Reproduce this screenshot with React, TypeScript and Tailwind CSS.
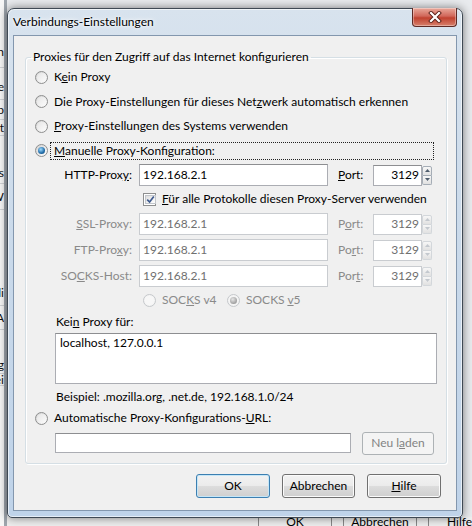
import React from "react";

const ui = "font-['Lato',sans-serif]";

type Child = { children?: React.ReactNode };

function Radio({ checked = false, disabled = false }: { checked?: boolean; disabled?: boolean }) {
  const ring = disabled
    ? "border-[#c5c8cb] bg-[#f4f4f4]"
    : "border-[#8e8f8f] bg-linear-to-br from-[#d2d2d2] to-[#ffffff]";
  const dot = checked
    ? disabled
      ? "bg-[radial-gradient(circle_at_40%_35%,#e6e6e6,#9a9a9a_75%)]"
      : "bg-[radial-gradient(circle_at_40%_35%,#9fdcff,#1f6aa6_60%,#174d7c)]"
    : disabled
      ? "bg-[#f7f7f7]"
      : "bg-linear-to-br from-[#e6e6e6] to-[#fbfbfb]";
  return (
    <span className={`shrink-0 w-[13px] h-[13px] rounded-full border flex items-center justify-center ${ring}`}>
      <span className={`rounded-full ${checked ? "w-[7px] h-[7px]" : "w-[9px] h-[9px]"} ${dot}`} />
    </span>
  );
}

function Checkbox() {
  return (
    <span className="shrink-0 w-[13px] h-[13px] border border-[#8e8f8f] bg-white p-[1px] flex">
      <span className="flex-1 flex items-center justify-center bg-linear-to-br from-[#dedede] to-[#ffffff] border border-[#c2c6cb]">
        <svg width="9" height="9" viewBox="0 0 9 9">
          <path d="M1.2 4.6 L3.6 7 L7.8 1.6" fill="none" stroke="#3e5a8e" strokeWidth="1.7" />
        </svg>
      </span>
    </span>
  );
}

function TextBox({ value = "", disabled = false, className = "" }: { value?: string; disabled?: boolean; className?: string }) {
  const look = disabled
    ? "border-[#c9ccd0] text-[#707070]"
    : "border-[#abadb3] border-t-[#8d8e91] text-black";
  return <div className={`flex items-center bg-white border pl-[3px] pr-[2px] ${look} ${className}`}>{value}</div>;
}

function Spinner({ disabled = false }: { disabled?: boolean }) {
  const fill = disabled ? "#c3c8ce" : "#4f5d6d";
  const edge = disabled ? "border-[#d3d7db]" : "border-[#a5adb6]";
  return (
    <div className="shrink-0 w-[10px] h-[19px] flex flex-col">
      <div className={`h-[10px] flex items-center justify-center border rounded-t-[2px] bg-linear-to-b from-[#f7f7f7] to-[#e1e1e1] ${edge}`}>
        <svg width="5" height="3" viewBox="0 0 5 3">
          <path d="M0 3 L2.5 0 L5 3 Z" fill={fill} />
        </svg>
      </div>
      <div className={`h-[9px] flex items-center justify-center border border-t-0 rounded-b-[2px] bg-linear-to-b from-[#f7f7f7] to-[#e1e1e1] ${edge}`}>
        <svg width="5" height="3" viewBox="0 0 5 3">
          <path d="M0 0 L2.5 3 L5 0 Z" fill={fill} />
        </svg>
      </div>
    </div>
  );
}

function ProxyRow({
  label,
  port,
  disabled = false,
  h,
}: {
  label: React.ReactNode;
  port: React.ReactNode;
  disabled?: boolean;
  h: string;
}) {
  const tone = disabled ? "text-[#8a8a8a]" : "text-black";
  return (
    <div className={`${h} flex items-center`}>
      <span className={`ml-[21px] w-[76px] text-right ${tone}`}>{label}</span>
      <TextBox value="192.168.2.1" disabled={disabled} className="ml-[7px] w-[189px] h-[22px]" />
      <span className={`ml-[10px] w-[35px] ${tone}`}>{port}</span>
      <TextBox value="3129" disabled={disabled} className="w-[49px] h-[21px] justify-end" />
      <Spinner disabled={disabled} />
    </div>
  );
}

function Button({ children, primary = false, disabled = false, className = "" }: Child & { primary?: boolean; disabled?: boolean; className?: string }) {
  const edge = primary ? "border-[#3c7fb1] shadow-[inset_0_0_0_1px_#c5e6f7]" : disabled ? "border-[#adb2b5]" : "border-[#707070] shadow-[inset_0_0_0_1px_#fbfbfb]";
  const bg = disabled
    ? "bg-[#f4f4f4] text-[#838383]"
    : "bg-[linear-gradient(#f2f2f2,#ebebeb_50%,#dddddd_50%,#cfcfcf)] text-black";
  return (
    <div className={`flex items-center justify-center rounded-[3px] border ${edge} ${bg} ${className}`}>{children}</div>
  );
}

function CloseButton() {
  return (
    <div className="w-[45px] h-[19px] -mt-[1px] rounded-b-[4px] border border-t-0 border-[#5e2a25] bg-[linear-gradient(#e9a99b,#d1675a_45%,#c0412f_55%,#d7806c)] flex items-center justify-center shadow-[inset_0_0_0_1px_rgba(255,255,255,0.35)]">
      <svg width="14" height="12" viewBox="0 0 14 12">
        <path d="M3 2 L11 10 M11 2 L3 10" stroke="#5b2019" strokeWidth="4" strokeLinecap="square" />
        <path d="M3 2 L11 10 M11 2 L3 10" stroke="#ffffff" strokeWidth="2.2" strokeLinecap="square" />
      </svg>
    </div>
  );
}

// window behind the dialog: only its edges show
const leftCells: [number, string][] = [
  [36, ""], [32, "n"], [6, ""], [26, "e"], [20, "b"], [16, "t"], [26, ""], [22, "s"], [26, "W"],
  [70, ""], [26, "li"], [24, "A"], [26, ""], [18, "g"], [12, "ei"], [100, ""],
];
const rightCells: [number, string][] = [
  [36, ""], [32, "Er"], [34, ""], [28, ""], [26, "n."], [30, ""], [30, "er"], [72, ""],
  [26, "er"], [24, "n."], [98, ""], [26, "n."], [64, ""],
];

function Strip({ cells, align }: { cells: [number, string][]; align: string }) {
  return (
    <div className="flex flex-col">
      {cells.map(([h, t], i) => (
        <div
          key={i}
          style={{ height: h }}
          className={`flex items-center overflow-hidden whitespace-nowrap ${align} ${i > 0 && t ? "border-b border-[#d2d4d7]" : ""} text-[#111]`}
        >
          {t}
        </div>
      ))}
    </div>
  );
}

function Backdrop() {
  return (
    <div className="absolute inset-0 flex flex-col">
      <div className="h-[10px] bg-linear-to-b from-[#c9ccd0] to-[#eef0f2]" />
      <div className="flex-1 flex">
        <div className="w-[7px] bg-[#f7f7f7] border-r-[3px] border-[#9fa6ae]">
          <Strip cells={leftCells} align="justify-end" />
        </div>
        <div className="flex-1 flex flex-col justify-end">
          <div className="h-[9px] flex items-start bg-[#eeeeee] pl-[251px] gap-[11px] overflow-hidden">
            <div className="w-[74px] h-[20px] border border-[#888] flex justify-center leading-[22px] -mt-[7px]">OK</div>
            <div className="w-[74px] h-[20px] border border-[#888] flex justify-center leading-[22px] -mt-[7px]">Abbrechen</div>
            <div className="w-[74px] h-[20px] border border-[#888] flex justify-start pl-[18px] leading-[22px] -mt-[7px]">
              <span><u>H</u>ilfe</span>
            </div>
          </div>
        </div>
        <div className="w-[9px] bg-[#fafafa] border-l-[3px] border-[#a8c3e2]">
          <Strip cells={rightCells} align="justify-start" />
        </div>
      </div>
    </div>
  );
}

export default function App() {
  return (
    <div className={`relative w-[472px] h-[526px] overflow-hidden bg-[#e9ebee] text-[12px] leading-[16px] ${ui}`}>
      <Backdrop />

      <div className="absolute left-[7px] top-[8px] w-[456px] h-[510px] flex flex-col rounded-t-[7px] rounded-b-[5px] border border-[#3f4954] bg-linear-to-b from-[#d8e3ee] via-[#c9d9ea] to-[#bfd3e9] px-[5px] pb-[6px] shadow-[0_0_10px_rgba(0,0,0,0.5),inset_0_0_0_1px_rgba(255,255,255,0.6)]">
        <div className="h-[26px] shrink-0 flex items-start justify-between">
          <span className="mt-[5px] text-black [text-shadow:0_0_6px_#ffffff,0_0_3px_#ffffff]">Verbindungs-Einstellungen</span>
          <CloseButton />
        </div>

        <div className="flex-1 flex flex-col border border-[#8397ae] bg-[#f0f0f0] pl-[11px] pr-[13px] text-black">
          <fieldset className="mt-[13px] border border-[#d5dfe5] rounded-[3px] pl-[9px] pr-[9px] pb-[8px] shadow-[1px_1px_0_#ffffff,inset_1px_1px_0_#ffffff]">
            <legend className="-ml-[4px] px-[2px]">Proxies für den Zugriff auf das Internet konfigurieren</legend>

            <div className="h-[24px] flex items-center gap-[6px]">
              <Radio />
              <span>K<u>e</u>in Proxy</span>
            </div>
            <div className="h-[25px] flex items-center gap-[6px]">
              <Radio />
              <span>Die Proxy-Einstellungen für dieses Net<u>z</u>werk automatisch erkennen</span>
            </div>
            <div className="h-[24px] flex items-center gap-[6px]">
              <Radio />
              <span><u>P</u>roxy-Einstellungen des Systems verwenden</span>
            </div>
            <div className="h-[25px] flex items-center">
              <Radio checked />
              <div className="ml-[2px] w-[384px] h-[18px] flex items-center border border-dotted border-[#222] pl-[3px]">
                <span><u>M</u>anuelle Proxy-Konfiguration:</span>
              </div>
            </div>

            <ProxyRow h="h-[24px]" label={<>HTTP-Prox<u>y</u>:</>} port={<><u>P</u>ort:</>} />

            <div className="h-[24px] flex items-center gap-[6px] pl-[108px]">
              <Checkbox />
              <span><u>F</u>ür alle Protokolle diesen Proxy-Server verwenden</span>
            </div>

            <ProxyRow h="h-[26px]" disabled label={<><u>S</u>SL-Proxy:</>} port={<>P<u>o</u>rt:</>} />
            <ProxyRow h="h-[26px]" disabled label={<>FTP-Pro<u>x</u>y:</>} port={<>Po<u>r</u>t:</>} />
            <ProxyRow h="h-[26px]" disabled label={<>SO<u>C</u>KS-Host:</>} port={<>Por<u>t</u>:</>} />

            <div className="h-[22px] flex items-center pl-[108px] text-[#8a8a8a]">
              <div className="w-[84px] flex items-center gap-[6px]">
                <Radio disabled />
                <span>SOC<u>K</u>S v4</span>
              </div>
              <div className="flex items-center gap-[6px]">
                <Radio disabled checked />
                <span>SOCKS <u>v</u>5</span>
              </div>
            </div>

            <div className="h-[22px] flex items-center pl-[21px]">
              <span>Kei<u>n</u> Proxy für:</span>
            </div>
            <div className="ml-[20px] w-[382px] h-[51px] bg-white border border-[#abadb3] border-t-[#8d8e91] pl-[4px] pt-[1px]">
              localhost, 127.0.0.1
            </div>
            <div className="h-[26px] flex items-center pl-[21px]">
              <span>Beispiel: .mozilla.org, .net.de, 192.168.1.0/24</span>
            </div>

            <div className="h-[16px] flex items-center gap-[6px]">
              <Radio />
              <span>Automatische Proxy-Konfigurations-<u>U</u>RL:</span>
            </div>
            <div className="mt-[5px] h-[24px] flex items-center">
              <TextBox className="ml-[20px] w-[296px] h-[20px]" />
              <Button disabled className="ml-[11px] w-[72px] h-[23px]">
                <span>Neu l<u>a</u>den</span>
              </Button>
            </div>
          </fieldset>

          <div className="mt-[10px] flex justify-end gap-[12px] pr-[2px]">
            <Button primary className="w-[74px] h-[24px]">OK</Button>
            <Button className="w-[73px] h-[24px]">Abbrechen</Button>
            <Button className="w-[74px] h-[24px]">
              <span><u>H</u>ilfe</span>
            </Button>
          </div>
        </div>
      </div>
    </div>
  );
}
